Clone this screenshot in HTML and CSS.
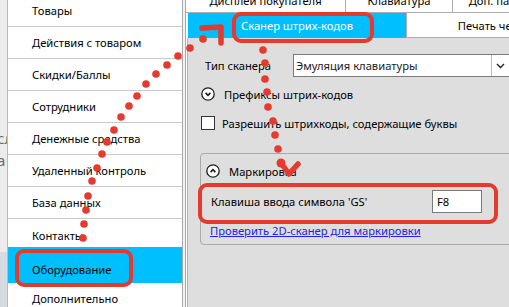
FILE: index.html
```html
<!DOCTYPE html>
<html lang="ru">
<head>
<meta charset="utf-8">
<title>Оборудование</title>
<link rel="stylesheet" href="styles.css">
</head>
<body>
<div class="screen">
  <div class="bgwin">
    <div class="bgwin-text bgwin-t1">сл</div>
    <div class="bgwin-text bgwin-t2">а</div>
    <div class="bgwin-bottom"></div>
  </div>
  <div class="sidebar">
    <ul class="menu">
      <li class="menu-item">Товары</li>
      <li class="menu-item">Действия с товаром</li>
      <li class="menu-item">Скидки/Баллы</li>
      <li class="menu-item">Сотрудники</li>
      <li class="menu-item">Денежные средства</li>
      <li class="menu-item">Удаленный контроль</li>
      <li class="menu-item">База данных</li>
      <li class="menu-item menu-item-short">Контакты</li>
      <li class="menu-item menu-item-selected">Оборудование</li>
      <li class="menu-item">Дополнительно</li>
    </ul>
  </div>
  <div class="splitter"></div>
  <div class="main">
    <div class="tabs-top">
      <div class="tab tab-w1">Дисплеи покупателя</div>
      <div class="tab tab-w2">Клавиатура</div>
      <div class="tab tab-w3">Доп. параметры</div>
    </div>
    <div class="tabs-second">
      <div class="tab-selected">Сканер штрих-кодов</div>
      <div class="tab tab-print">Печать чеков</div>
    </div>
    <div class="content">
      <div class="row-type">
        <div class="label-type">Тип сканера</div>
        <div class="select">
          <span class="select-text">Эмуляция клавиатуры</span>
          <span class="select-arrow">
            <svg width="9" height="6" viewBox="0 0 9 6"><path d="M1 1 L4.5 4.5 L8 1" fill="none" stroke="#222" stroke-width="1.4"/></svg>
          </span>
        </div>
      </div>
      <div class="expander">
        <span class="circle-btn">
          <svg width="14" height="14" viewBox="0 0 14 14"><circle cx="7" cy="7" r="6.2" fill="#fff" stroke="#1e1e1e" stroke-width="1.3"/><path d="M4.6 5.9 L7 8.3 L9.4 5.9" fill="none" stroke="#1e1e1e" stroke-width="1.7"/></svg>
        </span>
        <span>Префиксы штрих-кодов</span>
      </div>
      <div class="check-row">
        <span class="checkbox"></span>
        <span>Разрешить штрихкоды, содержащие буквы</span>
      </div>
      <div class="group">
        <div class="group-head">
          <span class="circle-btn">
            <svg width="14" height="14" viewBox="0 0 14 14"><circle cx="7" cy="7" r="6.2" fill="#fff" stroke="#1e1e1e" stroke-width="1.3"/><path d="M4.6 8.1 L7 5.7 L9.4 8.1" fill="none" stroke="#1e1e1e" stroke-width="1.7"/></svg>
          </span>
          <span>Маркировка</span>
        </div>
        <div class="key-row">
          <span class="key-label">Клавиша ввода символа 'GS'</span>
          <span class="key-input">F8</span>
        </div>
        <a class="link" href="#">Проверить 2D-сканер для маркировки</a>
      </div>
    </div>
  </div>
  <svg class="annot" width="509" height="307" viewBox="0 0 509 307">
    <g fill="none" stroke="#e53a30" stroke-width="4">
      <rect x="17" y="251" width="114" height="34" rx="7"/>
      <rect x="234" y="14" width="138" height="27" rx="7"/>
      <rect x="200" y="185" width="296" height="37" rx="7"/>
    </g>
    <g fill="#e53a30">
      <circle cx="83" cy="238" r="3.8"/>
      <circle cx="84" cy="224" r="3.8"/>
      <circle cx="86" cy="210" r="3.8"/>
      <circle cx="88" cy="196" r="3.8"/>
      <circle cx="92" cy="181" r="3.8"/>
      <circle cx="97" cy="168" r="3.8"/>
      <circle cx="102" cy="154" r="3.8"/>
      <circle cx="107" cy="142" r="3.8"/>
      <circle cx="114" cy="130" r="3.8"/>
      <circle cx="121" cy="117" r="3.8"/>
      <circle cx="129" cy="106" r="3.8"/>
      <circle cx="137" cy="96" r="3.8"/>
      <circle cx="146" cy="84" r="3.8"/>
      <circle cx="156" cy="74" r="3.8"/>
      <circle cx="167" cy="65" r="3.8"/>
      <circle cx="178" cy="56" r="3.8"/>
      <circle cx="190" cy="48" r="3.8"/>
      <circle cx="203" cy="39" r="3.8"/>
      <circle cx="263" cy="50" r="3.8"/>
      <circle cx="265" cy="63" r="3.8"/>
      <circle cx="265" cy="79" r="3.8"/>
      <circle cx="267" cy="92" r="3.8"/>
      <circle cx="268" cy="107" r="3.8"/>
      <circle cx="273" cy="121" r="3.8"/>
      <circle cx="275" cy="135" r="3.8"/>
      <circle cx="278" cy="149" r="3.8"/>
      <circle cx="281" cy="163" r="4.5"/>
    </g>
    <g fill="none" stroke="#e53a30" stroke-width="5.5" stroke-linecap="round" stroke-linejoin="round">
      <path d="M202 28 L221 27 L221 43"/>
      <path d="M281 163 L289 174 L298 164"/>
    </g>
  </svg>
</div>
</body>
</html>
```
FILE: styles.css
```css
* { box-sizing: border-box; }
html, body { margin: 0; padding: 0; }
body {
  font-family: "Noto Sans", "Open Sans", sans-serif;
  font-size: 11.2px;
  color: #000;
  background: #ececec;
}
.screen {
  position: relative;
  display: flex;
  width: 509px;
  height: 307px;
  overflow: hidden;
}
.bgwin {
  width: 7px;
  flex-shrink: 0;
  background: #ececec;
  overflow: hidden;
  display: flex;
  flex-direction: column;
}
.bgwin-text {
  font-size: 15px;
  color: #6a6a6a;
  margin-left: -3px;
  line-height: 20px;
  white-space: nowrap;
}
.bgwin-t1 { margin-top: 128px; }
.bgwin-t2 { margin-top: 2px; }
.bgwin-bottom {
  margin-top: 82px;
  flex: 1;
  background: #d6dbe1;
}
.sidebar {
  width: 175px;
  flex-shrink: 0;
  background: #fff;
  border-left: 1px solid #b9b9b9;
  overflow: hidden;
}
.menu {
  list-style: none;
  margin: -5px 0 0 0;
  padding: 0;
}
.menu-item {
  height: 32px;
  display: flex;
  align-items: center;
  padding-left: 24px;
  border-bottom: 1px solid #c9c9c9;
  white-space: nowrap;
}
.menu-item-short {
  height: 28px;
  padding-top: 4px;
  border-bottom: none;
}
.menu-item-selected {
  height: 36px;
  background: #00bfff;
  border-bottom: none;
  padding-top: 8px;
}
.splitter {
  width: 4px;
  flex-shrink: 0;
  background: #f2f2f2;
  border-left: 1px solid #a8a8a8;
  border-right: 1px solid #a8a8a8;
}
.main {
  flex: 1;
  min-width: 0;
  display: flex;
  flex-direction: column;
  background: #fff;
}
.tabs-top {
  height: 13px;
  display: flex;
  align-items: flex-end;
  overflow: hidden;
  border-bottom: 1px solid #acacac;
  flex-shrink: 0;
}
.tab {
  height: 25px;
  flex-shrink: 0;
  display: flex;
  align-items: center;
  justify-content: center;
  white-space: nowrap;
  background: #fff;
}
.tabs-top .tab { padding-top: 1px; }
.tab-w1 { width: 160px; border-right: 1px solid #acacac; }
.tab-w2 { width: 107px; border-right: 1px solid #acacac; }
.tab-w3 { width: 120px; }
.tabs-second {
  height: 25px;
  display: flex;
  flex-shrink: 0;
  padding-left: 2px;
  background: #fff;
}
.tab-selected {
  width: 218px;
  flex-shrink: 0;
  background: #00bfff;
  color: #fff;
  display: flex;
  align-items: center;
  justify-content: center;
  white-space: nowrap;
}
.tab-print {
  width: 175px;
  border-left: 1px solid #acacac;
  border-bottom: 1px solid #acacac;
}
.content {
  flex: 1;
  background: #dedede;
  margin-left: 1px;
  border-left: 1px solid #b4b4b4;
  padding: 16px 0 0 17px;
  overflow: hidden;
}
.row-type {
  display: flex;
  align-items: center;
  height: 23px;
}
.label-type {
  width: 88px;
  flex-shrink: 0;
  white-space: nowrap;
}
.select {
  width: 228px;
  flex-shrink: 0;
  height: 23px;
  display: flex;
  align-items: center;
  background: #fff;
  border: 1px solid #7a7a7a;
  padding-left: 2px;
  color: #1b1b1b;
}
.select-text { flex: 1; white-space: nowrap; }
.select-arrow {
  width: 29px;
  height: 21px;
  border-left: 1px solid #bdbdbd;
  display: flex;
  align-items: center;
  padding-left: 4px;
}
.expander {
  display: flex;
  align-items: center;
  gap: 9px;
  height: 14px;
  margin: 10px 0 0 -4px;
  white-space: nowrap;
}
.circle-btn {
  width: 14px;
  height: 14px;
  display: flex;
}
.check-row {
  display: flex;
  align-items: center;
  gap: 7px;
  height: 14px;
  margin: 15px 0 0 -4px;
  white-space: nowrap;
}
.checkbox {
  width: 14px;
  height: 14px;
  background: #fff;
  border: 1px solid #333;
  flex-shrink: 0;
}
.group {
  width: 330px;
  height: 92px;
  margin: 23px 0 0 -5px;
  border: 1px solid #a9a9a9;
  border-radius: 4px;
  padding: 10px 0 0 5px;
}
.group-head {
  display: flex;
  align-items: center;
  gap: 9px;
  height: 14px;
  white-space: nowrap;
}
.key-row {
  display: flex;
  align-items: center;
  margin: 12px 0 0 5px;
  height: 23px;
}
.key-label {
  width: 221px;
  flex-shrink: 0;
  white-space: nowrap;
}
.key-input {
  width: 50px;
  height: 23px;
  background: #fff;
  border: 1px solid #7a7a7a;
  padding-left: 4px;
  display: flex;
  align-items: center;
}
.link {
  display: inline-block;
  margin: 10px 0 0 4px;
  color: #2222ee;
  text-decoration: underline;
  white-space: nowrap;
}
.annot {
  position: absolute;
  left: 0;
  top: 0;
  pointer-events: none;
}
```
